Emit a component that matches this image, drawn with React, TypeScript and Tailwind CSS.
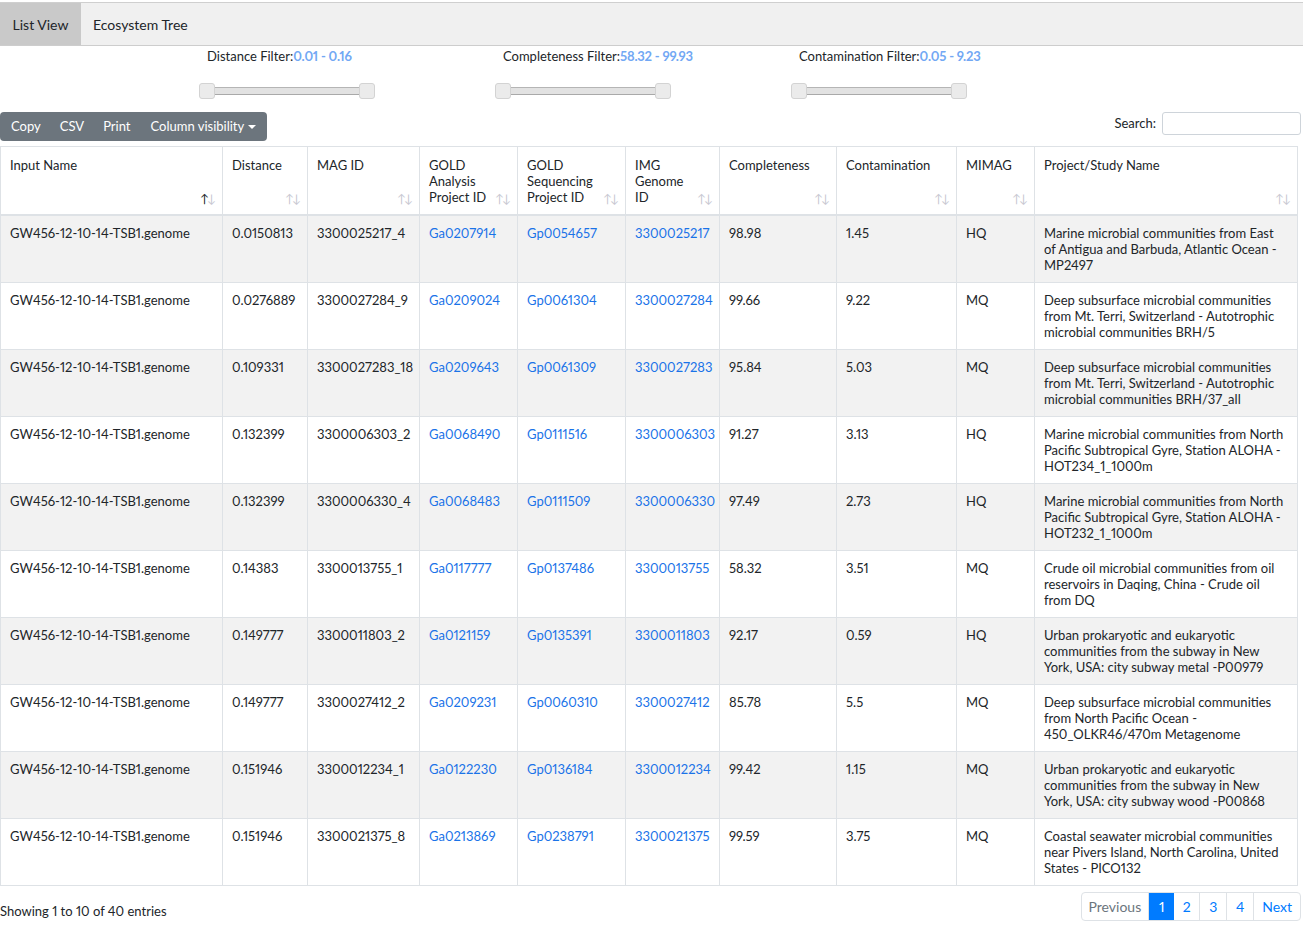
import React from "react";

type Row = {
  name: string;
  distance: string;
  mag: string;
  ga: string;
  gp: string;
  img: string;
  completeness: string;
  contamination: string;
  mimag: string;
  project: string;
};

const rows: Row[] = [
  { name: "GW456-12-10-14-TSB1.genome", distance: "0.0150813", mag: "3300025217_4", ga: "Ga0207914", gp: "Gp0054657", img: "3300025217", completeness: "98.98", contamination: "1.45", mimag: "HQ", project: "Marine microbial communities from East of Antigua and Barbuda, Atlantic Ocean - MP2497" },
  { name: "GW456-12-10-14-TSB1.genome", distance: "0.0276889", mag: "3300027284_9", ga: "Ga0209024", gp: "Gp0061304", img: "3300027284", completeness: "99.66", contamination: "9.22", mimag: "MQ", project: "Deep subsurface microbial communities from Mt. Terri, Switzerland - Autotrophic microbial communities BRH/5" },
  { name: "GW456-12-10-14-TSB1.genome", distance: "0.109331", mag: "3300027283_18", ga: "Ga0209643", gp: "Gp0061309", img: "3300027283", completeness: "95.84", contamination: "5.03", mimag: "MQ", project: "Deep subsurface microbial communities from Mt. Terri, Switzerland - Autotrophic microbial communities BRH/37_all" },
  { name: "GW456-12-10-14-TSB1.genome", distance: "0.132399", mag: "3300006303_2", ga: "Ga0068490", gp: "Gp0111516", img: "3300006303", completeness: "91.27", contamination: "3.13", mimag: "HQ", project: "Marine microbial communities from North Pacific Subtropical Gyre, Station ALOHA - HOT234_1_1000m" },
  { name: "GW456-12-10-14-TSB1.genome", distance: "0.132399", mag: "3300006330_4", ga: "Ga0068483", gp: "Gp0111509", img: "3300006330", completeness: "97.49", contamination: "2.73", mimag: "HQ", project: "Marine microbial communities from North Pacific Subtropical Gyre, Station ALOHA - HOT232_1_1000m" },
  { name: "GW456-12-10-14-TSB1.genome", distance: "0.14383", mag: "3300013755_1", ga: "Ga0117777", gp: "Gp0137486", img: "3300013755", completeness: "58.32", contamination: "3.51", mimag: "MQ", project: "Crude oil microbial communities from oil reservoirs in Daqing, China - Crude oil from DQ" },
  { name: "GW456-12-10-14-TSB1.genome", distance: "0.149777", mag: "3300011803_2", ga: "Ga0121159", gp: "Gp0135391", img: "3300011803", completeness: "92.17", contamination: "0.59", mimag: "HQ", project: "Urban prokaryotic and eukaryotic communities from the subway in New York, USA: city subway metal -P00979" },
  { name: "GW456-12-10-14-TSB1.genome", distance: "0.149777", mag: "3300027412_2", ga: "Ga0209231", gp: "Gp0060310", img: "3300027412", completeness: "85.78", contamination: "5.5", mimag: "MQ", project: "Deep subsurface microbial communities from North Pacific Ocean - 450_OLKR46/470m Metagenome" },
  { name: "GW456-12-10-14-TSB1.genome", distance: "0.151946", mag: "3300012234_1", ga: "Ga0122230", gp: "Gp0136184", img: "3300012234", completeness: "99.42", contamination: "1.15", mimag: "MQ", project: "Urban prokaryotic and eukaryotic communities from the subway in New York, USA: city subway wood -P00868" },
  { name: "GW456-12-10-14-TSB1.genome", distance: "0.151946", mag: "3300021375_8", ga: "Ga0213869", gp: "Gp0238791", img: "3300021375", completeness: "99.59", contamination: "3.75", mimag: "MQ", project: "Coastal seawater microbial communities near Pivers Island, North Carolina, United States - PICO132" },
];

const columns: { label: React.ReactNode; width: string }[] = [
  { label: "Input Name", width: "w-[222px]" },
  { label: "Distance", width: "w-[85px]" },
  { label: "MAG ID", width: "w-[112px]" },
  { label: <>GOLD<br />Analysis<br />Project ID</>, width: "w-[98px]" },
  { label: <>GOLD<br />Sequencing<br />Project ID</>, width: "w-[108px]" },
  { label: <>IMG<br />Genome<br />ID</>, width: "w-[94px]" },
  { label: "Completeness", width: "w-[117px]" },
  { label: "Contamination", width: "w-[120px]" },
  { label: "MIMAG", width: "w-[78px]" },
  { label: "Project/Study Name", width: "w-[263px]" },
];

function RangeFilter({ label, value }: { label: string; value: string }) {
  return (
    <div className="w-[296px] flex flex-col">
      <div className="pl-[8px] h-[22px] flex items-center text-[13px] text-[#212529]">
        {label}
        <span className="text-[#72a8f4] font-bold tracking-[-0.2px]">{value}</span>
      </div>
      <div className="mt-[14px] w-[176px] h-[18px] flex items-center">
        <div className="w-[16px] h-[16px] rounded-[3px] border border-[#d3d3d3] bg-[#ebebeb]" />
        <div className="flex-1 h-[8px] bg-[#e2e2e2] border-t border-b border-[#b5b5b5] border-b-[#a9a9a9]" />
        <div className="w-[16px] h-[16px] rounded-[3px] border border-[#d3d3d3] bg-[#ebebeb]" />
      </div>
    </div>
  );
}

function SortIcon({ active }: { active?: boolean }) {
  return (
    <span className="absolute right-[8px] bottom-[9px] text-[12px] leading-none tracking-[-2px]">
      <span className={active ? "text-[#212529]" : "text-[#c8c8d2]"}>↑</span>
      <span className="text-[#c8c8d2]">↓</span>
    </span>
  );
}

const td = "align-top px-[9px] pt-[9px] border border-[#dee2e6]";

export default function App() {
  return (
    <div className="w-[1303px] min-h-[927px] bg-white text-[#212529] proportional-nums font-['Lato','Liberation_Sans',sans-serif]">
      <div className="mt-[2px] border-t-[1px] border-[#cfcfcf] bg-[#f0f0f0] border-b border-b-[#cdcdcd] flex h-[44px] text-[14px]">
        <div className="bg-[#c9c9c9] w-[81px] flex items-center justify-center">List View</div>
        <div className="px-[12px] flex items-center">Ecosystem Tree</div>
      </div>

      <div className="flex pl-[199px] h-[66px]">
        <RangeFilter label="Distance Filter:" value="0.01 - 0.16" />
        <RangeFilter label="Completeness Filter:" value="58.32 - 99.93" />
        <RangeFilter label="Contamination Filter:" value="0.05 - 9.23" />
      </div>

      <div className="flex items-start justify-between pr-[2px]">
        <div className="flex bg-[#6c757d] rounded-[4px] h-[29px] pt-[1px] text-white text-[13px]">
          <span className="pl-[11px] pr-[10px] flex items-center">Copy</span>
          <span className="px-[9px] flex items-center">CSV</span>
          <span className="px-[10px] flex items-center">Print</span>
          <span className="pl-[10px] pr-[11px] flex items-center">
            Column visibility
            <span className="ml-[4px] w-0 h-0 border-l-[4px] border-r-[4px] border-t-[4px] border-l-transparent border-r-transparent border-t-white" />
          </span>
        </div>
        <label className="flex items-center text-[13px] h-[23px]">
          Search:
          <input className="ml-[6px] w-[139px] h-[23px] border border-[#ced4da] rounded-[3px] bg-white" />
        </label>
      </div>

      <table className="mt-[5px] table-fixed w-[1297px] border-collapse text-[13px] leading-[16px]">
        <thead>
          <tr>
            {columns.map((c, i) => (
              <th
                key={i}
                className={`${c.width} relative h-[67px] align-top text-left font-normal px-[9px] pt-[10px] pb-[9px] border border-[#dee2e6] border-b-2`}
              >
                {c.label}
                <SortIcon active={i === 0} />
              </th>
            ))}
          </tr>
        </thead>
        <tbody>
          {rows.map((r, i) => (
            <tr key={i} className={i % 2 === 0 ? "bg-[#f2f2f2]" : "bg-white"}>
              <td className={`${td} h-[67px]`}>{r.name}</td>
              <td className={td}>{r.distance}</td>
              <td className={td}>{r.mag}</td>
              <td className={`${td} text-[#1a73e8]`}>{r.ga}</td>
              <td className={`${td} text-[#1a73e8]`}>{r.gp}</td>
              <td className={`${td} text-[#1a73e8]`}>{r.img}</td>
              <td className={td}>{r.completeness}</td>
              <td className={td}>{r.contamination}</td>
              <td className={td}>{r.mimag}</td>
              <td className={`${td} pb-[9px]`}>{r.project}</td>
            </tr>
          ))}
        </tbody>
      </table>

      <div className="flex justify-between items-start pt-[6px] pr-[2px]">
        <div className="pt-[10px] text-[13px]">Showing 1 to 10 of 40 entries</div>
        <div className="flex h-[29px] text-[14px] border border-[#dee2e6] rounded-[4px]">
          <span className="px-[7px] flex items-center text-[#6c757d] border-r border-[#dee2e6]">Previous</span>
          <span className="w-[25px] flex items-center justify-center bg-[#007bff] text-white">1</span>
          <span className="w-[26px] flex items-center justify-center text-[#007bff] border-r border-[#dee2e6]">2</span>
          <span className="w-[27px] flex items-center justify-center text-[#007bff] border-r border-[#dee2e6]">3</span>
          <span className="w-[27px] flex items-center justify-center text-[#007bff] border-r border-[#dee2e6]">4</span>
          <span className="px-[8px] flex items-center text-[#007bff]">Next</span>
        </div>
      </div>
    </div>
  );
}
